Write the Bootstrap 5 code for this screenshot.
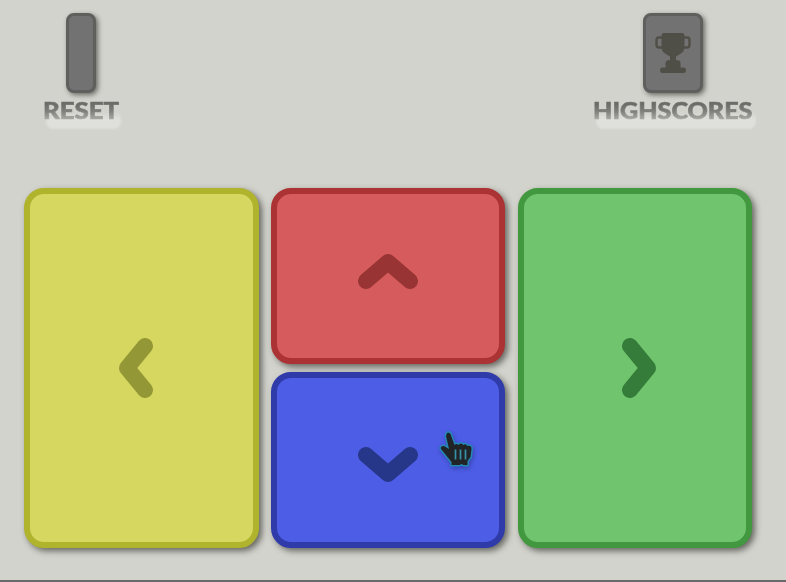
<!DOCTYPE html>
<html lang="en">
<head>
<meta charset="utf-8">
<meta name="viewport" content="width=device-width, initial-scale=1">
<title>Arrow pads</title>
<link href="https://cdn.jsdelivr.net/npm/bootstrap@5.3.0/dist/css/bootstrap.min.css" rel="stylesheet">
<style>
body{height:582px;overflow:hidden;background:#d3d3cd;font-family:Lato,"Liberation Sans",sans-serif;border-bottom:2px solid #696969}
.paper{position:absolute;inset:0;z-index:-1;width:100%;height:580px}
.top-bar{height:188px;padding:13px 34px 0 43px}
.key{height:80px;border:3px solid #5f5f5e;border-radius:8px;background:#727272;box-shadow:2px 2px 5px rgba(50,50,45,.65);padding:0}
.key-reset{width:30px;margin-left:23px}
.key-scores{width:60px;margin-left:50px}
.scores-group{width:159px}
.key-label{font-weight:900;font-size:22px;line-height:26px;margin-top:5px;white-space:nowrap;transform-origin:0 0;color:transparent;-webkit-text-stroke:.6px transparent;background:linear-gradient(#6c6d69 25%,#7d7e79 50%,#acaca6 84%);-webkit-background-clip:text;background-clip:text}
.label-reset{transform:scaleX(1.172)}
.label-scores{transform:scaleX(1.14)}
.label-wrap{position:relative;display:block}
.glow{position:absolute;z-index:-1;top:18px;left:3px;height:18px;border-radius:7px;background:linear-gradient(rgba(225,225,220,0),#dfdfdb 45%,#dfdfdb);filter:blur(1.3px)}
.glow-reset{width:75px}
.glow-scores{width:160px}
.pads{display:grid;grid-template-columns:235px 234px 234px;column-gap:12.400px;padding-left:24px;height:360px}
.pad{border:6px solid;border-radius:20px;padding:0;box-shadow:3px 3px 6px rgba(45,45,40,.65);display:flex;align-items:center;justify-content:center}
.pad svg{fill:none;stroke-width:16;stroke-linecap:round;stroke-linejoin:round}
.pad-half{height:176px}
.pad-yellow{background:#d5d761;border-color:#b0b32c}.pad-yellow svg{stroke:#949735}
.pad-red{background:#d65b5c;border-color:#ab3333}.pad-red svg{stroke:#983434}
.pad-blue{background:#4d5de5;border-color:#2f3ba9}.pad-blue svg{stroke:#263789}
.pad-green{background:#70c46d;border-color:#41983e}.pad-green svg{stroke:#357c3a}
.pad-yellow svg{margin-right:11px}
.pad-green svg{margin-left:8px}
.pad-red svg{margin-top:-9px}
.pad-blue svg{margin-top:9px}
.pointer{position:absolute;left:437px;top:429px;filter:drop-shadow(1px 2px 2px rgba(20,30,100,.4))}
.halo{stroke:#2588b4;stroke-width:3;stroke-linejoin:round;paint-order:stroke}
</style>
<script src="https://cdn.jsdelivr.net/npm/bootstrap@5.3.0/dist/js/bootstrap.bundle.min.js"></script>
</head>
<body class="position-relative m-0">
<svg class="paper" aria-hidden="true"><filter id="grain" x="0" y="0" width="100%" height="100%"><feTurbulence type="fractalNoise" baseFrequency=".018 .03" numOctaves="4" seed="4"/><feColorMatrix values="0 0 0 0 .65  0 0 0 0 .65  0 0 0 0 .6  .6 0 0 0 -.22"/></filter><rect width="100%" height="100%" filter="url(#grain)"/></svg>
<header class="top-bar d-flex justify-content-between align-items-start">
  <div>
    <button class="key key-reset d-block" aria-label="Reset"></button>
    <span class="label-wrap"><span class="glow glow-reset"></span><span class="key-label label-reset d-inline-block">RESET</span></span>
  </div>
  <div class="scores-group">
    <button class="key key-scores d-flex align-items-center justify-content-center" aria-label="Highscores">
      <svg width="36" height="40" viewBox="0 0 36 40"><path d="M9 0h18q2.500 0 2.500 3v11q0 4-3.500 6.500l-5 3v3.500q4.500 0 4.500 3v4.500h3q2.500 0 2.500 2.700T28.500 40h-21Q5 40 5 37.200t2.500-2.700h3V30q0-3 4.500-3v-3.500l-5-3Q6.500 18 6.500 14V3Q6.500 0 9 0z" fill="#504f47"/><path d="M8 4.500H3.500Q1.500 4.500 1.500 7V12Q1.500 14.500 4 14.500H7M28 4.500h4.500Q34.500 4.500 34.500 7v5q0 2.500-2.500 2.500h-3" fill="none" stroke="#504f47" stroke-width="2.400"/></svg>
    </button>
    <span class="label-wrap"><span class="glow glow-scores"></span><span class="key-label label-scores d-inline-block">HIGHSCORES</span></span>
  </div>
</header>
<main class="pads">
  <button class="pad pad-yellow" aria-label="Left"><svg width="34" height="60" viewBox="0 0 34 60"><path d="M26 8L8 30l18 22"/></svg></button>
  <div class="d-flex flex-column gap-2">
    <button class="pad pad-half pad-red w-100" aria-label="Up"><svg width="60" height="35" viewBox="0 0 60 35"><path d="M8 27L30 8l22 19"/></svg></button>
    <button class="pad pad-half pad-blue w-100" aria-label="Down"><svg width="60" height="35" viewBox="0 0 60 35"><path d="M8 8l22 19L52 8"/></svg></button>
  </div>
  <button class="pad pad-green" aria-label="Right"><svg width="34" height="60" viewBox="0 0 34 60"><path d="M8 8l18 22L8 52"/></svg></button>
</main>
<svg class="pointer" width="40" height="42" viewBox="0 0 40 42"><path class="halo" d="M10 4q2-1 3.500 1l4 11q2-2 4 0 2-3 5 0 2-2 4 1 4-1 4 3l-1 8-3 4v4h-4l-2-1-2 1h-8v-3L4 20q-1-3 3-3l5 3L9 7z" fill="#202426"/><path d="M18.500 20.500v10M23.500 20.500v10M28.500 20.500v10" stroke="#3691a8" stroke-width="1.700"/></svg>
</body>
</html>
